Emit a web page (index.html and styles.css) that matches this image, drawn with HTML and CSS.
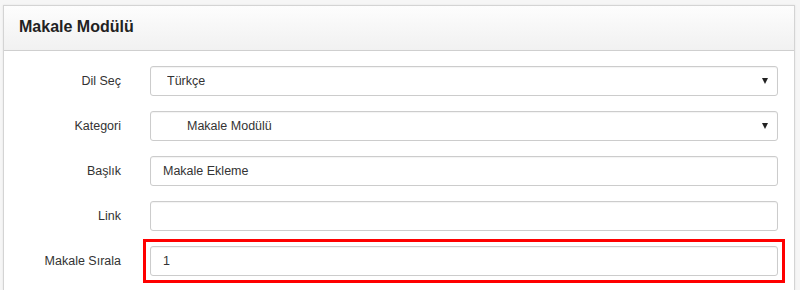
FILE: index.html
```html
<!DOCTYPE html>
<html lang="tr">
<head>
    <meta charset="UTF-8">
    <meta name="viewport" content="width=device-width, initial-scale=1.0">
    <title>Makale Modülü</title>
    <link rel="stylesheet" href="styles.css">
</head>
<body>

  <div class="panel">
    <div class="panel-heading">
      <h3>Makale Modülü</h3>
    </div>
    <form class="panel-body">
      <div class="form-row">
        <label>Dil Seç</label>
        <div class="select-wrap">
          <select class="form-control">
            <option>Türkçe</option>
          </select>
        </div>
      </div>
      <div class="form-row">
        <label>Kategori</label>
        <div class="select-wrap">
          <select class="form-control indent">
            <option>Makale Modülü</option>
          </select>
        </div>
      </div>
      <div class="form-row">
        <label>Başlık</label>
        <input class="form-control" type="text" value="Makale Ekleme">
      </div>
      <div class="form-row">
        <label>Link</label>
        <input class="form-control" type="text" value="">
      </div>
      <div class="form-row">
        <label>Makale Sırala</label>
        <div class="marked">
          <input class="form-control" type="text" value="1">
        </div>
      </div>
    </form>
  </div>

</body>
</html>
```

FILE: styles.css
```css
* {
    margin: 0;
    padding: 0;
    box-sizing: border-box;
}
body {
    background: #f6f6f6;
    font-family: 'Liberation Sans', Arial, sans-serif;
    font-size: 12.5px;
    color: #333;
    overflow: hidden;
}
.panel {
    margin: 5px 0 0 3px;
    width: 792px;
    height: 285px;
    background: #fff;
    border: 1px solid #d4d4d4;
    border-bottom: none;
    box-shadow: 0 0 2px rgba(0, 0, 0, 0.08);
}
.panel-heading {
    height: 45px;
    display: flex;
    align-items: center;
    padding: 0 15px 2px;
    background: linear-gradient(#fdfdfd, #f1f1f1);
    border-bottom: 1px solid #cfcfcf;
}
.panel-heading h3 {
    font-size: 16px;
    font-weight: bold;
    color: #222;
}
.panel-body {
    padding: 15px 15px 0 0;
}
.form-row {
    display: flex;
    align-items: center;
    margin-bottom: 15px;
}
.form-row label {
    width: 117px;
    margin-right: 29px;
    text-align: right;
    color: #333;
}
.form-control,
.select-wrap,
.marked {
    width: 628px;
    height: 30px;
}
.form-control {
    font-family: inherit;
    font-size: 12.5px;
    color: #333;
    padding: 0 12px;
    background: #fff;
    border: 1px solid #ccc;
    border-radius: 3px;
    box-shadow: inset 0 1px 1px rgba(0, 0, 0, 0.05);
    outline: none;
}
select.form-control {
    appearance: none;
    -webkit-appearance: none;
    width: 100%;
    padding-left: 16px;
}
select.indent {
    padding-left: 36px;
}
.select-wrap {
    position: relative;
}
.select-wrap::after {
    content: "";
    position: absolute;
    right: 10px;
    top: 12px;
    border-left: 3.5px solid transparent;
    border-right: 3.5px solid transparent;
    border-top: 6px solid #222;
    pointer-events: none;
}
.marked {
    position: relative;
}
.marked::after {
    content: "";
    position: absolute;
    top: -7px;
    left: -7px;
    right: -7px;
    bottom: -7px;
    border: 3px solid #f00;
    pointer-events: none;
}
```
